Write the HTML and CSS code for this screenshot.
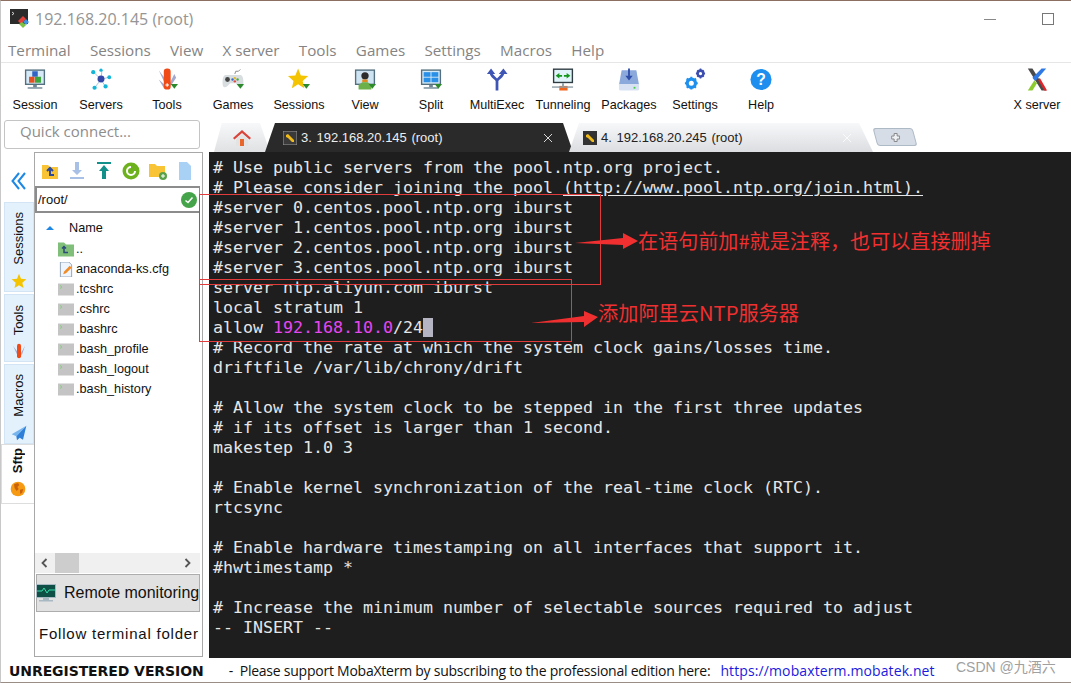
FILE: index.html
```html
<!DOCTYPE html>
<html lang="en">
<head>
<meta charset="utf-8">
<title>192.168.20.145 (root)</title>
<link rel="stylesheet" href="styles.css">
</head>
<body>
<div class="window">
  <header class="titlebar">
    <svg class="appicon" viewBox="0 0 20 20"><rect x="0" y="0" width="18" height="15" fill="#2b2b2b"/><path d="M2 3l2 1.5-2 1.5" stroke="#fff" fill="none" stroke-width=".8"/><path d="M8 12l5-5 3 3-5 5z" fill="#e3403a"/><path d="M13 13l3-3 3 3-3 3z" fill="#3f8fe0"/><path d="M9 15l3-2 4 3-3 3z" fill="#7cc142"/></svg>
    <span class="wintitle">192.168.20.145 (root)</span>
    <span class="winctl"><i class="minimize"></i><i class="maximize"></i></span>
  </header>
  <nav class="menubar">
    <span>Terminal</span><span>Sessions</span><span>View</span><span>X server</span><span>Tools</span><span>Games</span><span>Settings</span><span>Macros</span><span>Help</span>
  </nav>
  <div class="toolbar">
    <div class="tool"><svg class="ti" viewBox="0 0 24 24"><rect x="1" y="1" width="22" height="17" fill="#54707f"/><rect x="2.5" y="2.5" width="19" height="14" fill="#d6e9f6"/><rect x="9" y="3" width="6" height="6" fill="#2f64c4"/><rect x="5.5" y="9" width="6" height="6.500" fill="#e2511f"/><rect x="12" y="9" width="6.500" height="6.500" fill="#3da63a"/><rect x="10" y="18" width="4" height="2.500" fill="#6d8594"/><rect x="4" y="20.500" width="16" height="1.500" fill="#6d8594"/></svg><span>Session</span></div>
    <div class="tool"><svg class="ti" viewBox="0 0 24 24"><path d="M12 12L4 4M12 12L13 2M12 12L22 9M12 12L5 21M12 12L17 20" stroke="#7fb2d8" stroke-width=".8"/><circle cx="12" cy="11.500" r="3.800" fill="#3446a8"/><circle cx="3.500" cy="4" r="2.300" fill="#14b5d6"/><circle cx="12" cy="1.800" r="1.800" fill="#14b5d6"/><circle cx="21" cy="9.500" r="2.100" fill="#14b5d6"/><circle cx="5" cy="21" r="2.300" fill="#14b5d6"/><circle cx="17" cy="19.500" r="2.300" fill="#14b5d6"/></svg><span>Servers</span></div>
    <div class="tool"><svg class="ti" viewBox="0 0 24 24"><path d="M3 2l9 12-2 3zM3 12l6 10 2-3zM20 6l-5 10 1 3 6-9z" fill="#a3a9cf"/><rect x="8.500" y="0" width="7.500" height="23" rx="3.500" fill="#f04a16"/><path d="M12.200 16v4M10.200 18h4" stroke="#fff" stroke-width="1.200"/><path class="drop" d="M16 17h8l-4 5z"/></svg><span>Tools</span></div>
    <div class="tool"><svg class="ti" viewBox="0 0 24 24"><path d="M14 6l1-3h3l2-2" stroke="#666" stroke-width=".8" fill="none"/><path d="M4 7h16c3 0 4 6 3 12-1 2-3 2-5 0l-3-3H9l-3 3c-2 2-4 2-5 0C0 13 1 7 4 7z" fill="#d8dde0"/><circle cx="6" cy="12" r="2.600" fill="#444"/><circle cx="14" cy="10.500" r="1.300" fill="#e5b92c"/><circle cx="14" cy="14" r="1.300" fill="#e34a3f"/><circle cx="11.500" cy="12" r="1.300" fill="#3468cc"/><circle cx="17" cy="12" r="1.300" fill="#4da843"/><path class="drop" d="M16 17h8l-4 5z"/></svg><span>Games</span></div>
    <div class="tool"><svg class="ti" viewBox="0 0 24 24"><path d="M11 0l3 7.500 8 .700-6 5.300 1.800 8L11 17.300 4.200 21.500 6 13.500 0 8.200l8-.700z" fill="#f4c400"/><path class="drop" d="M16 17h8l-4 5z"/></svg><span>Sessions</span></div>
    <div class="tool"><svg class="ti" viewBox="0 0 24 24"><rect x="1" y="1" width="22" height="17" fill="#54707f"/><rect x="2.500" y="2.500" width="19" height="14" fill="#cfe4f2"/><circle cx="12" cy="8" r="4" fill="#2c2c2c"/><path d="M9 12h6v3H9z" fill="#e08a1e"/><path d="M5 23v-5l4-3h6l4 3v5z" fill="#6cb04a"/><path class="drop" d="M16 17h8l-4 5z"/></svg><span>View</span></div>
    <div class="tool"><svg class="ti" viewBox="0 0 24 24"><rect x="1" y="1" width="22" height="17" fill="#54707f"/><rect x="2.500" y="2.500" width="19" height="14" fill="#d6e9f6"/><rect x="4" y="4" width="7.500" height="5" fill="#2a8fe6"/><rect x="12.500" y="4" width="7.500" height="5" fill="#2a8fe6"/><rect x="4" y="10" width="7.500" height="5" fill="#2a8fe6"/><rect x="12.500" y="10" width="7.500" height="5" fill="#2a8fe6"/><rect x="10" y="18" width="4" height="2.500" fill="#6d8594"/><rect x="4" y="20.500" width="16" height="1.500" fill="#6d8594"/><path class="drop" d="M16 17h8l-4 5z"/></svg><span>Split</span></div>
    <div class="tool"><svg class="ti" viewBox="0 0 24 24"><path d="M12 24V14C12 10 5 10 5 3M12 14c0-4 7-4 7-11" stroke="#3f55b5" stroke-width="3" fill="none"/><path d="M1 6l4.500-6L10 6zM14 6l5-6 4.500 6z" fill="#3f55b5"/></svg><span>MultiExec</span></div>
    <div class="tool"><svg class="ti" viewBox="0 0 24 24"><rect x="1" y="0" width="22" height="16" fill="#2e3b41"/><rect x="2.500" y="1.500" width="19" height="13" fill="#e0f3f8"/><path d="M4 8l4-3v2h3v2H8v2zM20 8l-4-3v2h-3v2h3v2z" fill="#12961a"/><rect x="8" y="19" width="9" height="5" fill="#f1651d"/><rect x="0" y="19.500" width="23" height="1.500" fill="#8f9da5"/><rect x="11" y="16" width="2" height="4" fill="#8f9da5"/></svg><span>Tunneling</span></div>
    <div class="tool"><svg class="ti" viewBox="0 0 24 24"><path d="M4 2h16l3 16H1z" fill="#8ca9db"/><path d="M1 17h22v5a2 2 0 0 1-2 2H3a2 2 0 0 1-2-2z" fill="#d8e2f3"/><path d="M11 0h2v8h3l-4 5-4-5h3z" fill="#2f4ea8"/><rect x="17" y="20" width="2" height="2" fill="#45d04a"/></svg><span>Packages</span></div>
    <div class="tool"><svg class="ti" viewBox="0 0 24 24"><circle cx="8" cy="16" r="4.500" fill="none" stroke="#1e90ee" stroke-width="3.500"/><path d="M8 9v3M8 20v3M1 16h3M12 16h3M3 11l2 2M11 19l2 2M13 11l-2 2M5 19l-2 2" stroke="#1e90ee" stroke-width="2.200"/><circle cx="18" cy="5.500" r="3.200" fill="none" stroke="#3d4eb0" stroke-width="2.800"/><path d="M18 0v2M18 9v2M13 5.500h2M21 5.500h2M14.500 2l1.500 1.500M20 7.500L21.500 9M21.500 2L20 3.500M16 7.500L14.500 9" stroke="#3d4eb0" stroke-width="1.800"/></svg><span>Settings</span></div>
    <div class="tool"><svg class="ti" viewBox="0 0 24 24"><circle cx="12" cy="12" r="11.500" fill="#1e8fef"/><text class="qmark" x="12" y="18" text-anchor="middle">?</text></svg><span>Help</span></div>
    <div class="tool tool-end"><svg class="ti" viewBox="0 0 24 24"><path d="M2 0h5l15 24h-5z" fill="#4a4a4a"/><path d="M17 0h5L10 14 7 10z" fill="#2f79e6"/><path d="M2 24h5l5-8-3-3z" fill="#8ecb2f"/><path d="M15 10l8 14h-3l-6.500-11z" fill="#e0242a"/></svg><span>X server</span></div>
  </div>
  <div class="tabrow">
    <div class="quick">Quick connect...</div>
    <div class="tabs">
      <div class="tab tab-home"><svg class="homeicon" viewBox="0 0 18 18"><path d="M9 1L0 9l1.500 1.500L9 4l7.500 6.500L18 9z" fill="#d9453a"/><path d="M3 10l6-5 6 5v7H3z" fill="#e3e3e3"/><rect x="7" y="10" width="4" height="7" fill="#e8662c"/></svg></div>
      <div class="tab tab-active"><svg class="keyicon" viewBox="0 0 14 14"><rect width="14" height="14" fill="#3a3a3a" stroke="#999"/><path d="M3 4l2-1 2 2 4 4v2H9L5 7 3 6z" fill="#f1bb1b"/></svg><span class="tabtext">3. 192.168.20.145 (root)</span><svg class="tabx" viewBox="0 0 10 10"><path d="M1 1l8 8M9 1l-8 8"/></svg></div>
      <div class="tab tab-idle"><svg class="keyicon" viewBox="0 0 14 14"><rect width="14" height="14" fill="#333"/><path d="M3 4l2-1 2 2 4 4v2H9L5 7 3 6z" fill="#f1bb1b"/></svg><span class="tabtext">4. 192.168.20.245 (root)</span><svg class="tabx" viewBox="0 0 10 10"><path d="M1 1l8 8M9 1l-8 8"/></svg></div>
      <div class="tab-new"><svg class="plusicon" viewBox="0 0 9 9"><path d="M3 0.500h3v2.500h2.500v3H6v2.500H3V6H0.500V3H3z"/></svg></div>
    </div>
  </div>
  <main class="main">
    <aside class="strip">
      <div class="collapse"><svg class="chevs" viewBox="0 0 15 18"><path d="M8 1L1.500 9 8 17M14 1L7.500 9 14 17"/></svg></div>
      <div class="vtab vt-sessions"><span class="vlabel">Sessions</span><svg class="vicon" viewBox="0 0 24 24"><path d="M12 1l3 7.500 8 .700-6 5.300 1.800 8L12 18.300 5.200 22.500 7 14.500 1 9.200l8-.700z" fill="#f4c400"/></svg></div>
      <div class="vtab vt-tools"><span class="vlabel">Tools</span><svg class="vicon" viewBox="0 0 24 24"><path d="M3 4l8 11-1 4zM21 4l-6 11 1 4z" fill="#a3a9cf"/><rect x="9" y="1" width="6" height="22" rx="3" fill="#f04a16"/></svg></div>
      <div class="vtab vt-macros"><span class="vlabel">Macros</span><svg class="vicon" viewBox="0 0 24 24"><path d="M23 1L1 14l7 3z" fill="#76b4ee"/><path d="M23 1L8 17l1 6 4-4 5 3z" fill="#2d7fd8"/></svg></div>
      <div class="vtab vt-sftp"><span class="vlabel">Sftp</span><svg class="vicon" viewBox="0 0 24 24"><circle cx="12" cy="12" r="11" fill="#f59a12"/><path d="M6 5l6-2 2 3-3 3 2 3-3 3-3-4zM15 13l5-1-2 6-3 1z" fill="#c9620a"/></svg></div>
    </aside>
    <section class="panel">
      <div class="ptools">
        <svg class="pi" viewBox="0 0 18 18"><path d="M1 3h6l2 2h8v12H1z" fill="#f8c334"/><path d="M9 6v7h4M6 9l3-3 3 3" stroke="#2c4a9c" stroke-width="2" fill="none"/></svg>
        <svg class="pi" viewBox="0 0 18 18"><path d="M7 0h4v8h3l-5 5-5-5h3z" fill="#a8bfe6"/><rect x="2" y="15" width="14" height="2" fill="#a8bfe6"/></svg>
        <svg class="pi" viewBox="0 0 18 18"><rect x="2" y="0" width="14" height="2" fill="#12908a"/><path d="M9 3l5 6h-3v8H7V9H4z" fill="#12908a"/></svg>
        <svg class="pi" viewBox="0 0 18 18"><circle cx="9" cy="9" r="8.500" fill="#6db21d"/><path d="M13 9a4 4 0 1 1-4-4" stroke="#fff" stroke-width="2" fill="none"/></svg>
        <svg class="pi" viewBox="0 0 18 18"><path d="M0 2h6l2 2h8v11H0z" fill="#f8c334"/><circle cx="14" cy="14" r="4" fill="#5aa24a"/><path d="M12 14h4M14 12v4" stroke="#fff"/></svg>
        <svg class="pi" viewBox="0 0 18 18"><path d="M3 0h8l4 4v14H3z" fill="#a9d1f5"/></svg>
      </div>
      <div class="pathbox"><span>/root/</span><svg class="okicon" viewBox="0 0 16 16"><circle cx="8" cy="8" r="8" fill="#45a349"/><path d="M4.500 8.500l2.500 2 4.500-5" stroke="#fff" stroke-width="1.600" fill="none"/></svg></div>
      <div class="filehead"><i class="sortup"></i><span>Name</span></div>
      <ul class="files">
        <li><svg class="fi" viewBox="0 0 16 14"><path d="M0 0h6l2 2h8v12H0z" fill="#7fbf7a"/><path d="M6 4v6h4M4 6l2-2 2 2" stroke="#2c4a7c" stroke-width="1.500" fill="none"/></svg><span>..</span></li>
        <li><svg class="fi" viewBox="0 0 16 16"><path d="M2 0h9l3 3v13H2z" fill="#eef5fc" stroke="#8fa0b5"/><path d="M5 13l1-3 6-6 2 2-6 6z" fill="#f08a24"/></svg><span>anaconda-ks.cfg</span></li>
        <li><svg class="fi" viewBox="0 0 16 12"><rect width="16" height="12" fill="#c4c4c4"/><path d="M2 2l2 1.500-2 1.500" stroke="#7ccf6c" fill="none" stroke-width=".8"/></svg><span>.tcshrc</span></li>
        <li><svg class="fi" viewBox="0 0 16 12"><rect width="16" height="12" fill="#c4c4c4"/><path d="M2 2l2 1.500-2 1.500" stroke="#7ccf6c" fill="none" stroke-width=".8"/></svg><span>.cshrc</span></li>
        <li><svg class="fi" viewBox="0 0 16 12"><rect width="16" height="12" fill="#c4c4c4"/><path d="M2 2l2 1.500-2 1.500" stroke="#7ccf6c" fill="none" stroke-width=".8"/></svg><span>.bashrc</span></li>
        <li><svg class="fi" viewBox="0 0 16 12"><rect width="16" height="12" fill="#c4c4c4"/><path d="M2 2l2 1.500-2 1.500" stroke="#7ccf6c" fill="none" stroke-width=".8"/></svg><span>.bash_profile</span></li>
        <li><svg class="fi" viewBox="0 0 16 12"><rect width="16" height="12" fill="#c4c4c4"/><path d="M2 2l2 1.500-2 1.500" stroke="#7ccf6c" fill="none" stroke-width=".8"/></svg><span>.bash_logout</span></li>
        <li><svg class="fi" viewBox="0 0 16 12"><rect width="16" height="12" fill="#c4c4c4"/><path d="M2 2l2 1.500-2 1.500" stroke="#7ccf6c" fill="none" stroke-width=".8"/></svg><span>.bash_history</span></li>
      </ul>
      <div class="hscroll"><svg class="chev" viewBox="0 0 8 10"><path d="M6 1L2 5l4 4" stroke="#555" stroke-width="1.800" fill="none"/></svg><i class="thumb"></i><svg class="chev" viewBox="0 0 8 10"><path d="M2 1l4 4-4 4" stroke="#555" stroke-width="1.800" fill="none"/></svg></div>
      <div class="remote"><svg class="monicon" viewBox="0 0 20 18"><rect width="20" height="14" fill="#a9b9c4"/><rect x="1" y="1" width="18" height="12" fill="#0e4f46"/><path d="M1 7h5l2-3 3 5 2-3h6" stroke="#35e0a8" fill="none"/><rect x="7" y="14" width="6" height="2" fill="#a9b9c4"/><rect x="3" y="16" width="14" height="1.500" fill="#a9b9c4"/></svg><span>Remote monitoring</span></div>
      <div class="follow">Follow terminal folder</div>
    </section>
    <section class="terminal">
<pre class="term"># Use public servers from the pool.ntp.org project.
# Please consider joining the pool <u>(http://www.pool.ntp.org/join.html).</u>
#server 0.centos.pool.ntp.org iburst
#server 1.centos.pool.ntp.org iburst
#server 2.centos.pool.ntp.org iburst
#server 3.centos.pool.ntp.org iburst
server ntp.aliyun.com iburst
local stratum 1
allow <b class="ip">192.168.10.0</b>/24<b class="cursor"> </b>
# Record the rate at which the system clock gains/losses time.
driftfile /var/lib/chrony/drift

# Allow the system clock to be stepped in the first three updates
# if its offset is larger than 1 second.
makestep 1.0 3

# Enable kernel synchronization of the real-time clock (RTC).
rtcsync

# Enable hardware timestamping on all interfaces that support it.
#hwtimestamp *

# Increase the minimum number of selectable sources required to adjust
-- INSERT --</pre>
    </section>
  </main>
  <footer class="status">
    <b class="unreg">UNREGISTERED VERSION</b>
    <span class="support">-  Please support MobaXterm by subscribing to the professional edition here:</span>
    <a class="link">https://mobaxterm.mobatek.net</a>
  </footer>
  <div class="mark">CSDN @九酒六</div>
  <i class="box box1"></i>
  <i class="box box2"></i>
  <svg class="arrows" viewBox="0 0 1071 683"><path d="M575 243l48-5v-5l15 8-15 8v-4z" fill="#f03030"/><path d="M531 323l53-7v-5l14 6-14 10v-5z" fill="#f03030"/></svg>
  <span class="note note1">在语句前加#就是注释，也可以直接删掉</span>
  <span class="note note2">添加阿里云NTP服务器</span>
</div>
</body>
</html>
```

FILE: styles.css
```css
* { box-sizing: border-box; }
html, body { margin: 0; padding: 0; }
body { background: #fff; overflow: hidden; }
.window {
  position: relative;
  width: 1071px;
  height: 683px;
  display: flex;
  flex-direction: column;
  background: #fff;
  border-top: 1px solid #8d6f62;
  border-bottom: 1px solid #9a8d86;
  border-left: 1px solid #c8c8c8;
  font-family: "Liberation Sans", sans-serif;
  overflow: hidden;
}
.titlebar {
  height: 36px;
  flex: none;
  display: flex;
  align-items: center;
  padding: 0 17px 0 9px;
}
.appicon { width: 20px; height: 20px; margin-right: 5px; }
.wintitle { font: 16px "Open Sans", sans-serif; color: #959595; }
.winctl { margin-left: auto; display: flex; align-items: center; gap: 46px; }
.minimize { width: 12px; height: 1px; background: #888; }
.maximize { width: 12px; height: 12px; border: 1px solid #777; }
.menubar {
  height: 26px;
  flex: none;
  display: flex;
  gap: 19.300px;
  align-items: center;
  padding-left: 7px;
  font: 15.200px "Open Sans", sans-serif;
  color: #848484;
  border-bottom: 1px solid #e6e6e6;
}
.toolbar {
  height: 57px;
  flex: none;
  display: flex;
  padding-left: 1px;
}
.tool {
  width: 66px;
  display: flex;
  flex-direction: column;
  align-items: center;
  padding-top: 5px;
  font-size: 12.600px;
  color: #111;
  white-space: nowrap;
}
.tool-end { margin-left: auto; margin-right: 1px; }
.ti { width: 22px; height: 23px; margin-bottom: 7px; flex: none; }
.drop { fill: #2c8a2c; }
.qmark { font: bold 17px "Liberation Sans", sans-serif; fill: #fff; }
.tabrow { height: 32px; flex: none; display: flex; align-items: flex-start; }
.quick {
  width: 196px;
  height: 29px;
  margin-left: 3px;
  padding-left: 15px;
  border: 1px solid #c4c4c4;
  border-radius: 3px;
  font: 15px/21px "Open Sans", sans-serif;
  color: #8d8d8d;
}
.tabs { display: flex; margin-left: 14px; height: 32px; align-items: flex-end; }
.tab { height: 29px; display: flex; align-items: center; font-size: 13px; word-spacing: 1px; white-space: pre; }
.tab-home {
  width: 56px;
  justify-content: center;
  background: linear-gradient(#f6f8fa, #dfe1e3);
  clip-path: polygon(14% 0, 82% 0, 100% 100%, 0 100%);
}
.homeicon { width: 18px; height: 18px; }
.tab-active {
  width: 308px;
  margin-left: -5px;
  padding-left: 18px;
  color: #eee;
  background: #2a2a2a;
  clip-path: polygon(10px 0, 298px 0, 100% 100%, 0 100%);
}
.tab-idle {
  width: 304px;
  margin-left: -4px;
  padding-left: 14px;
  color: #222;
  background: linear-gradient(#f6f8fa, #dcdde0);
  clip-path: polygon(10px 0, 290px 0, 100% 100%, 0 100%);
}
.keyicon { width: 14px; height: 14px; margin-right: 4px; flex: none; }
.tabtext { flex: 1; }
.tabx { width: 10px; height: 10px; margin-right: 20px; fill: none; stroke: #d8d8d8; stroke-width: 1; flex: none; }
.tab-idle .tabx { stroke: #fafafa; margin-right: 21px; }
.tab-new {
  width: 40px;
  height: 18px;
  margin: 0 0 6px 2px;
  background: #d6dde6;
  border: 1px solid #aeb9c6;
  border-radius: 3px;
  display: flex;
  align-items: center;
  justify-content: center;
  transform: skewX(15deg);
}
.plusicon { width: 9px; height: 9px; fill: #eef1f4; stroke: #888; stroke-width: 1; transform: skewX(-15deg); }
.main { flex: 1; min-height: 0; display: flex; }
.strip { width: 33px; flex: none; display: flex; flex-direction: column; align-items: flex-end; }
.collapse {
  height: 50px;
  width: 33px;
  padding: 20px 0 0 10px;
}
.chevs { display: block; width: 15px; height: 18px; fill: none; stroke: #1e88e5; stroke-width: 2; }
.vtab {
  width: 30px;
  display: flex;
  flex-direction: column;
  align-items: center;
  justify-content: flex-end;
  gap: 8px;
  padding: 0 1px 2px 0;
  margin-bottom: 2px;
  background: #e3f1fd;
  border: 1px solid #d3e5f5;
  font-size: 13px;
  color: #111;
}
.vlabel { writing-mode: vertical-rl; transform: rotate(180deg); }
.vicon { width: 16px; height: 16px; flex: none; }
.vt-sessions { height: 90px; }
.vt-tools { height: 68px; }
.vt-macros { height: 80px; margin-bottom: 0; }
.vt-sftp { height: 60px; width: 33px; padding-bottom: 6px; background: #fff; border: 1px solid #ddd; border-right: 0; font-weight: bold; }
.panel {
  width: 169px;
  flex: none;
  display: flex;
  flex-direction: column;
  border: 1px solid #a8a8a8;
  margin-bottom: 1px;
}
.ptools { height: 33px; flex: none; display: flex; align-items: center; justify-content: space-between; padding: 3px 8px 0 6px; }
.pi { width: 18px; height: 18px; }
.pathbox {
  height: 27px;
  flex: none;
  display: flex;
  align-items: center;
  justify-content: space-between;
  padding: 0 2px 0 1px;
  border: 2px solid #8c8c8c;
  border-right-width: 1px;
  font-size: 13px;
  color: #111;
  margin-right: 2px;
}
.okicon { width: 16px; height: 16px; margin-top: 1px; }
.filehead { height: 25px; flex: none; display: flex; align-items: center; padding: 2px 0 0 11px; margin-top: 1px; font-size: 12.700px; color: #111; }
.sortup { width: 0; height: 0; border: 4px solid transparent; border-top: 0; border-bottom: 4px solid #1e88e5; margin-right: 15px; }
.files { list-style: none; margin: 0; padding: 0; flex: 1; font-size: 12.700px; color: #111; }
.files li { height: 20px; display: flex; align-items: center; padding-left: 23px; gap: 2px; }
.fi { width: 16px; height: 15px; flex: none; }
.hscroll { height: 20px; flex: none; display: flex; align-items: center; justify-content: space-between; background: #f0f0f0; margin-right: 2px; padding-right: 8px; }
.chev { width: 9px; height: 10px; margin-left: 5px; }
.thumb { width: 24px; height: 20px; background: #cdcdcd; margin-right: auto; margin-left: 6px; }
.remote {
  height: 38px;
  flex: none;
  display: flex;
  align-items: center;
  gap: 8px;
  margin: 1px 2px 0 1px;
  background: #e1e1e1;
  border: 1px solid #adadad;
  font-size: 16px;
  color: #111;
  white-space: nowrap;
}
.monicon { width: 20px; height: 20px; margin-left: -1px; flex: none; }
.follow { height: 44px; flex: none; padding-left: 4px; font-size: 15px; line-height: 43px; letter-spacing: .78px; color: #111; white-space: nowrap; }
.terminal { flex: 1; min-width: 0; margin-left: 6px; background: #1e1e1e; padding: 6px 0 0 4px; overflow: hidden; }
.term {
  margin: 0;
  font: 16.620px/20px "DejaVu Sans Mono", monospace;
  color: #e6e6e6;
  white-space: pre;
}
.term u { text-underline-offset: 2px; }
.ip { font-weight: normal; color: #e646f0; }
.cursor { font-weight: normal; background: #b4b4c2; }
.status { height: 24px; flex: none; display: flex; align-items: center; padding: 1px 0 0 8px; font-size: 14px; color: #111; white-space: nowrap; }
.unreg { font: bold 14px "DejaVu Sans", sans-serif; letter-spacing: -.08px; margin-right: 25px; }
.support { font: 14px "Open Sans", sans-serif; letter-spacing: -.24px; margin-right: 10px; white-space: pre; }
.link { font: 14px "Open Sans", sans-serif; letter-spacing: .11px; color: #1a1ae0; }
.mark { position: absolute; left: 955px; top: 655px; font: 14px "Liberation Sans", "Noto Sans CJK SC", sans-serif; color: #a0a0a0; }
.box { position: absolute; border: 1px solid #e23b3b; }
.box1 { left: 198px; top: 193px; width: 402px; height: 91px; border-width: 1.500px; }
.box2 { left: 198px; top: 278px; width: 373px; height: 63px; }
.arrows { position: absolute; left: -1px; top: -1px; width: 1071px; height: 683px; pointer-events: none; }
.note { position: absolute; color: #f03030; font-family: "Noto Sans CJK SC", sans-serif; white-space: nowrap; line-height: 26px; }
.note1 { left: 637px; top: 227px; font-size: 20.100px; }
.note2 { left: 597px; top: 299px; font-size: 20.200px; }
```
